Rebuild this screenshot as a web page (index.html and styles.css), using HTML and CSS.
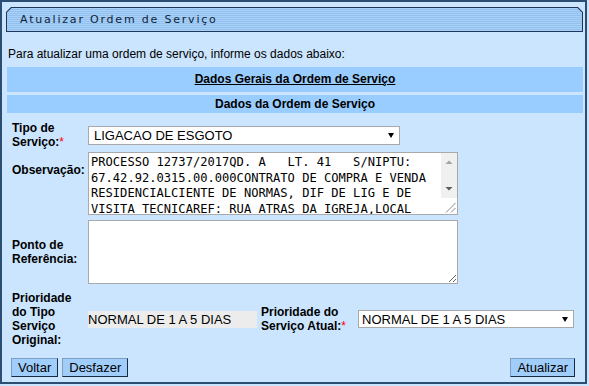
FILE: index.html
```html
<!DOCTYPE html>
<html lang="pt-BR">
<head>
<meta charset="utf-8">
<title>Atualizar Ordem de Serviço</title>
<link rel="stylesheet" href="styles.css">
</head>
<body>
<div class="frame">
  <div class="titlebar"><div class="titlebar-in">Atualizar Ordem de Serviço</div></div>
  <p class="intro">Para atualizar uma ordem de serviço, informe os dados abaixo:</p>
  <div class="bar bar-lg"><a href="#">Dados Gerais da Ordem de Serviço</a></div>
  <div class="bar bar-sm">Dados da Ordem de Serviço</div>
  <div class="form">
    <div class="row row-tipo">
      <div class="lbl">Tipo de Serviço:<span class="req">*</span></div>
      <div class="sel-wrap sel-tipo">
        <select><option>LIGACAO DE ESGOTO</option></select>
      </div>
    </div>
    <div class="row row-obs">
      <div class="lbl lbl-top">Observação:</div>
      <div class="ta-box">
        <textarea class="ta ta-obs">PROCESSO 12737/2017QD. A   LT. 41   S/NIPTU: 67.42.92.0315.00.000CONTRATO DE COMPRA E VENDA RESIDENCIALCIENTE DE NORMAS, DIF DE LIG E DE VISITA TECNICAREF: RUA ATRAS DA IGREJA,LOCAL</textarea>
        <div class="vscroll" aria-hidden="true">
          <svg width="16" height="61" viewBox="0 0 16 61">
            <rect x="0" y="0" width="16" height="45" fill="#f0f0f0"/>
            <polygon points="4.5,11 11.5,11 8,7.5" fill="#a3a3a3"/>
            <polygon points="4.5,34 11.5,34 8,37.5" fill="#5a5a5a"/>
            <rect x="0" y="45" width="16" height="16" fill="#ffffff"/>
            <line x1="5" y1="59.5" x2="14.5" y2="50" stroke="#8a8a8a" stroke-width="1"/>
            <line x1="10" y1="59.5" x2="14.5" y2="55" stroke="#8a8a8a" stroke-width="1"/>
          </svg>
        </div>
      </div>
    </div>
    <div class="row row-ref">
      <div class="lbl">Ponto de Referência:</div>
      <textarea class="ta ta-ref"></textarea>
    </div>
    <div class="row row-prio">
      <div class="lbl">Prioridade do Tipo Serviço Original:</div>
      <div class="static">NORMAL DE 1 A 5 DIAS</div>
      <div class="lbl lbl2">Prioridade do Serviço Atual:<span class="req">*</span></div>
      <div class="sel-wrap sel-prio">
        <select><option>NORMAL DE 1 A 5 DIAS</option></select>
      </div>
    </div>
  </div>
  <div class="actions">
    <div class="left">
      <button type="button" class="btn">Voltar</button>
      <button type="button" class="btn">Desfazer</button>
    </div>
    <button type="button" class="btn">Atualizar</button>
  </div>
</div>
</body>
</html>
```
FILE: styles.css
```css
* { box-sizing: border-box; }
html, body { margin: 0; padding: 0; }
body {
  background: #cbe5fe;
  font-family: "Liberation Sans", Arial, sans-serif;
  font-size: 12px;
  color: #000;
}
.frame {
  width: 587px;
  height: 384px;
  border: 2px solid #2d4e73;
  background: #cbe5fe;
}
.titlebar {
  margin: 5px 2px 0 4px;
  height: 25px;
  padding: 1px;
  background: #1e3657;
  clip-path: polygon(5px 0, calc(100% - 5px) 0, 100% 5px, 100% 100%, 0 100%, 0 5px);
}
.titlebar-in {
  height: 100%;
  background: repeating-linear-gradient(to bottom, #a9d0f7 0 1px, #93c1ef 1px 2px);
  clip-path: polygon(4.6px 0, calc(100% - 4.6px) 0, 100% 4.6px, 100% 100%, 0 100%, 0 4.6px);
  display: flex;
  align-items: center;
  padding-left: 13px;
  font-family: "DejaVu Sans", Verdana, sans-serif;
  font-size: 11px;
  letter-spacing: 1.8px;
  color: #0f1f38;
}
.intro {
  margin: 15px 0 0 6px;
  line-height: 14px;
}
.bar {
  margin: 0 2px 0 5px;
  background: #99ccff;
  text-align: center;
  font-weight: bold;
}
.bar-lg {
  margin-top: 6px;
  height: 25px;
  line-height: 25px;
}
.bar-lg a { color: #000; text-decoration: underline; }
.bar-sm {
  margin-top: 3px;
  height: 18px;
  line-height: 18px;
}
.form { padding-left: 10px; }
.row { display: flex; align-items: center; }
.row-tipo { margin-top: 8px; }
.row-obs { margin-top: 3px; }
.row-ref { margin-top: 5px; }
.row-prio { margin-top: 7px; }
.lbl {
  width: 76px;
  flex: none;
  font-weight: bold;
  line-height: 14px;
}
.lbl-top { align-self: flex-start; margin-top: 11px; }
.req { color: #ff0000; font-weight: normal; }
.sel-wrap { position: relative; flex: none; }
.sel-tipo { width: 312px; height: 19px; }
.sel-prio { width: 216px; height: 18px; margin-left: 1px; }
.sel-wrap select {
  -webkit-appearance: none;
  appearance: none;
  width: 100%;
  height: 100%;
  margin: 0;
  border: 1px solid #a9a9a9;
  border-radius: 0;
  background: #fff;
  color: #000;
  font-family: "Liberation Sans", Arial, sans-serif;
  font-size: 13px;
  padding: 0 0 0 5px;
}
.sel-prio select { padding-left: 3px; }
.sel-wrap::after {
  content: "";
  position: absolute;
  right: 6px;
  top: 50%;
  margin-top: -2px;
  border-left: 3.5px solid transparent;
  border-right: 3.5px solid transparent;
  border-top: 5px solid #000;
  pointer-events: none;
}
.ta {
  flex: none;
  width: 370px;
  margin: 0;
  border: 1px solid #a9a9a9;
  border-radius: 0;
  background: #fff;
  padding: 2px;
  font-family: "DejaVu Sans Mono", "Liberation Mono", monospace;
  font-size: 12.1px;
  line-height: 15.7px;
  color: #000;
}
.ta-box {
  position: relative;
  flex: none;
  width: 370px;
  height: 63px;
}
.ta-obs {
  display: block;
  height: 63px;
  overflow: hidden;
  resize: none;
  padding-right: 19px;
}
.vscroll {
  position: absolute;
  top: 1px;
  right: 1px;
  width: 16px;
  height: 61px;
}
.vscroll svg { display: block; }
.ta-ref { height: 64px; }
.static {
  flex: none;
  width: 169px;
  height: 17px;
  line-height: 17px;
  background: #ececec;
  font-size: 13px;
  white-space: nowrap;
}
.lbl2 { width: 96px; margin-left: 4px; }
.actions {
  margin-top: 11px;
  display: flex;
  justify-content: space-between;
  padding: 0 10px 0 9px;
}
.left { display: flex; gap: 4px; }
.btn {
  height: 19px;
  margin: 0;
  padding: 0 6px;
  font-family: "Liberation Sans", Arial, sans-serif;
  font-size: 13px;
  color: #000;
  background: #a0cdfa;
  border: 1px solid;
  border-color: #7c9ec2 #1a2a40 #1a2a40 #7c9ec2;
  border-radius: 0;
}
```
